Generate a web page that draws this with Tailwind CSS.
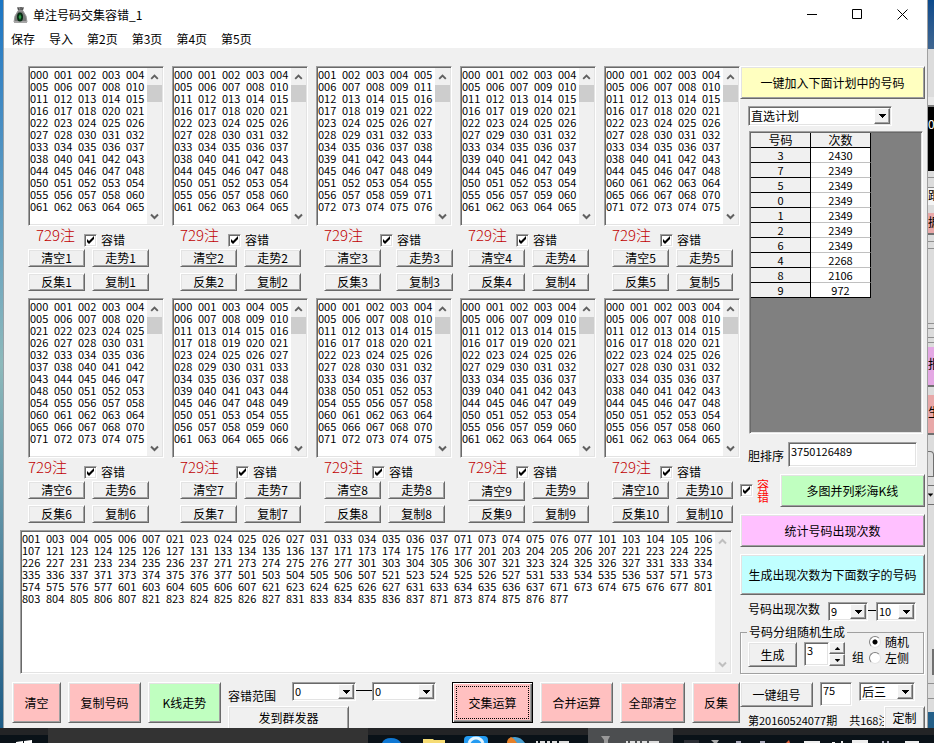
<!DOCTYPE html>
<html lang="zh-CN">
<head>
<meta charset="utf-8">
<title>单注号码交集容错_1</title>
<script src="https://cdn.jsdelivr.net/npm/@tailwindcss/browser@4"></script>
</head>
<body class="flex min-h-screen flex-col overflow-hidden bg-[#0a141b] font-['Noto_Sans_CJK_SC','Liberation_Sans',sans-serif] text-[12px] leading-[14px] text-black">

<svg class="hidden" aria-hidden="true">
  <symbol id="up" viewBox="0 0 15 18"><path d="M4 11.500 7.500 8l3.500 3.500" fill="none" stroke="currentColor" stroke-width="2"/></symbol>
  <symbol id="down" viewBox="0 0 15 18"><path d="M4 8.500 7.500 12 11 8.500" fill="none" stroke="currentColor" stroke-width="2"/></symbol>
  <symbol id="tri" viewBox="0 0 7 4"><path d="M0 0h7v1H6v1H5v1H4v1H3V3H2V2H1V1H0z" fill="currentColor"/></symbol>
  <symbol id="tick" viewBox="0 0 13 13"><path d="M3 5v3l2 2 5-5V2L5 7z" fill="#000"/></symbol>
</svg>

<div class="flex flex-1">
  <div class="w-1 shrink-0 border-r border-[#9aa3a8] bg-linear-to-b from-[#1a76c4] via-[#8db9bb] to-[#1d5c86]"></div>

  <main class="flex min-w-0 flex-1 flex-col bg-[#f0f0f0]">
    <header class="bg-white">
      <div class="flex h-[29px] items-center pl-[9px]">
        <svg class="h-4 w-[15px]" viewBox="0 0 15 16">
          <path d="M4 0h7l-1 4H5z" fill="#8a8a8a"/><path d="M5 1l1 2M8 0v3M10 1 9 3" stroke="#444" stroke-width="1"/>
          <path d="M5 4h5l3 5 1 6H1l1-6z" fill="#777" stroke="#999"/>
          <path d="M1 14h13v2H1z" fill="#a5a5a5"/>
          <ellipse cx="7" cy="10" rx="3" ry="4.500" fill="#062b12"/><path d="M7 7l1.500 3L7 13l-1.500-3z" fill="#2c9a45"/>
        </svg>
        <h1 class="ml-[5px] flex-1">单注号码交集容错_1</h1>
        <button class="flex h-[29px] w-[45px] items-center justify-center" aria-label="最小化"><svg class="h-[11px] w-[11px]" viewBox="0 0 11 11"><path d="M0 5.500h10" stroke="#000"/></svg></button>
        <button class="flex h-[29px] w-[45px] items-center justify-center" aria-label="最大化"><svg class="h-[11px] w-[11px]" viewBox="0 0 11 11"><path d="M.5.500h9v9h-9z" fill="none" stroke="#000"/></svg></button>
        <button class="mr-[2px] flex h-[29px] w-[45px] items-center justify-center" aria-label="关闭"><svg class="h-[11px] w-[11px]" viewBox="0 0 11 11"><path d="M.5.500l10 10M10.500.500l-10 10" stroke="#000"/></svg></button>
      </div>
      <nav class="flex h-[19px] items-center gap-[14px] pl-[7px]">
        <button>保存</button><button>导入</button><button>第2页</button><button>第3页</button><button>第4页</button><button>第5页</button>
      </nav>
    </header>

    <div class="flex flex-1">
      <section class="flex min-w-0 flex-1 flex-col pt-[18px]">
        <div id="panels" class="grid grid-cols-5 gap-x-2 gap-y-[7px] pl-6"></div>

        <div class="mt-[7px] mr-2 ml-4 flex h-36 border border-t-[#a0a0a0] border-r-white border-b-white border-l-[#a0a0a0] bg-white p-px shadow-[inset_1px_1px_0_#696969,inset_-1px_-1px_0_#e3e3e3]">
          <textarea id="result" aria-label="结果号码" class="min-w-0 flex-1 resize-none overflow-hidden text-[11px] leading-[12px] whitespace-pre outline-none [tab-size:24px]"></textarea>
          <div class="flex w-[15px] flex-col justify-between bg-[#f0f0f0] text-[#bfbfbf]">
            <svg class="h-[18px] w-[15px]"><use href="#up"/></svg>
            <svg class="h-[18px] w-[15px]"><use href="#down"/></svg>
          </div>
        </div>

        <div class="mt-2 flex h-[46px] items-start gap-[7px] pl-2">
          <button class="h-[41px] w-[49px] shrink-0 border border-t-white border-r-[#696969] border-b-[#696969] border-l-white bg-[#ffc0c0] shadow-[inset_1px_1px_0_#e3e3e3,inset_-1px_-1px_0_#a0a0a0]">清空</button>
          <button class="h-[41px] w-[73px] shrink-0 border border-t-white border-r-[#696969] border-b-[#696969] border-l-white bg-[#ffc0c0] shadow-[inset_1px_1px_0_#e3e3e3,inset_-1px_-1px_0_#a0a0a0]">复制号码</button>
          <button class="h-[41px] w-[73px] shrink-0 border border-t-white border-r-[#696969] border-b-[#696969] border-l-white bg-[#c0ffc0] shadow-[inset_1px_1px_0_#e3e3e3,inset_-1px_-1px_0_#a0a0a0]">K线走势</button>
          <div class="mr-[9px] flex min-w-[208px] flex-1 flex-col items-start">
            <div class="flex h-6 w-full items-start">
              <label for="from" class="w-16 pt-[7px]">容错范围</label>
              <span class="relative h-[19px] w-16 border border-t-[#a0a0a0] border-r-white border-b-white border-l-[#a0a0a0] bg-white shadow-[inset_1px_1px_0_#696969,inset_-1px_-1px_0_#e3e3e3]">
                <select id="from" class="block h-full w-full appearance-none pl-[2px] text-[11px] leading-[15px] outline-none"><option>0</option></select>
                <span class="pointer-events-none absolute inset-y-px right-px flex w-4 items-center justify-center border border-t-white border-r-[#696969] border-b-[#696969] border-l-white bg-[#f0f0f0] shadow-[inset_-1px_-1px_0_#a0a0a0]"><svg class="h-1 w-[7px]"><use href="#tri"/></svg></span>
              </span>
              <span class="mt-2 h-px w-4 bg-black"></span>
              <span class="relative h-[19px] w-16 border border-t-[#a0a0a0] border-r-white border-b-white border-l-[#a0a0a0] bg-white shadow-[inset_1px_1px_0_#696969,inset_-1px_-1px_0_#e3e3e3]">
                <select aria-label="容错范围上限" class="block h-full w-full appearance-none pl-[2px] text-[11px] leading-[15px] outline-none"><option>0</option></select>
                <span class="pointer-events-none absolute inset-y-px right-px flex w-4 items-center justify-center border border-t-white border-r-[#696969] border-b-[#696969] border-l-white bg-[#f0f0f0] shadow-[inset_-1px_-1px_0_#a0a0a0]"><svg class="h-1 w-[7px]"><use href="#tri"/></svg></span>
              </span>
            </div>
            <button class="h-[22px] w-[121px] border border-b-0 border-t-white border-r-[#696969] border-l-white bg-[#f0f0f0] shadow-[inset_1px_1px_0_#e3e3e3,inset_-1px_0_0_#a0a0a0]">发到群发器</button>
          </div>
          <button class="h-[41px] w-[81px] shrink-0 border border-black bg-[#ffc0c0] p-[3px] shadow-[inset_1px_1px_0_#fff,inset_-1px_-1px_0_#696969,inset_-2px_-2px_0_#a0a0a0]"><span class="flex h-full items-center justify-center border border-dotted border-black">交集运算</span></button>
          <button class="h-[41px] w-[73px] shrink-0 border border-t-white border-r-[#696969] border-b-[#696969] border-l-white bg-[#ffc0c0] shadow-[inset_1px_1px_0_#e3e3e3,inset_-1px_-1px_0_#a0a0a0]">合并运算</button>
          <button class="h-[41px] w-[65px] shrink-0 border border-t-white border-r-[#696969] border-b-[#696969] border-l-white bg-[#ffc0c0] shadow-[inset_1px_1px_0_#e3e3e3,inset_-1px_-1px_0_#a0a0a0]">全部清空</button>
          <button class="h-[41px] w-12 shrink-0 border border-t-white border-r-[#696969] border-b-[#696969] border-l-white bg-[#ffc0c0] shadow-[inset_1px_1px_0_#e3e3e3,inset_-1px_-1px_0_#a0a0a0]">反集</button>
        </div>
      </section>

      <aside class="flex w-[187px] shrink-0 flex-col pt-[18px] pr-[2px]">
        <button class="h-[33px] border border-t-white border-r-[#696969] border-b-[#696969] border-l-white bg-[#ffffc0] shadow-[inset_1px_1px_0_#e3e3e3,inset_-1px_-1px_0_#a0a0a0]">一键加入下面计划中的号码</button>

        <div class="relative mt-[7px] ml-2 h-5 w-36 border border-t-[#a0a0a0] border-r-white border-b-white border-l-[#a0a0a0] bg-white shadow-[inset_1px_1px_0_#696969,inset_-1px_-1px_0_#e3e3e3]">
          <select aria-label="计划" class="block h-full w-full appearance-none pl-[2px] outline-none"><option>直选计划</option></select>
          <span class="pointer-events-none absolute inset-y-px right-px flex w-4 items-center justify-center border border-t-white border-r-[#696969] border-b-[#696969] border-l-white bg-[#f0f0f0] shadow-[inset_-1px_-1px_0_#a0a0a0]"><svg class="h-1 w-[7px]"><use href="#tri"/></svg></span>
        </div>

        <div class="mt-[5px] mr-[2px] ml-[9px] h-[303px] border border-t-[#a0a0a0] border-r-white border-b-white border-l-[#a0a0a0] bg-[#808080] p-px shadow-[inset_1px_1px_0_#696969,inset_-1px_-1px_0_#e3e3e3]">
          <table class="w-[120px] table-fixed border-separate border-spacing-0 text-center text-[11px] leading-[14px]">
            <thead><tr>
              <th class="h-[15px] border-r border-b border-black bg-[#f0f0f0] p-0 text-[12px] font-normal">号码</th>
              <th class="h-[15px] border-r border-b border-black bg-[#f0f0f0] p-0 text-[12px] font-normal">次数</th>
            </tr></thead>
            <tbody id="counts"></tbody>
          </table>
        </div>

        <div class="mt-2 flex h-[25px] items-start pl-2">
          <label for="order" class="w-10 pt-[7px]">胆排序</label>
          <input id="order" value="3750126489" class="h-[25px] w-[129px] border border-t-[#a0a0a0] border-r-white border-b-white border-l-[#a0a0a0] bg-white pb-[8px] pl-[2px] text-[11px] shadow-[inset_1px_1px_0_#696969,inset_-1px_-1px_0_#e3e3e3] outline-none">
        </div>

        <div class="mt-[7px] flex items-center">
          <label class="flex flex-1 items-center gap-1 text-[#ff0000]">
            <span class="relative h-[13px] w-[13px]"><input type="checkbox" checked class="peer block h-[13px] w-[13px] appearance-none border border-t-[#a0a0a0] border-r-white border-b-white border-l-[#a0a0a0] bg-white shadow-[inset_1px_1px_0_#696969,inset_-1px_-1px_0_#e3e3e3]"><svg class="pointer-events-none absolute top-0 left-0 hidden h-[13px] w-[13px] peer-checked:block"><use href="#tick"/></svg></span>
            <span class="w-3 leading-[12px]">容错</span>
          </label>
          <button class="h-[33px] w-[145px] border border-t-white border-r-[#696969] border-b-[#696969] border-l-white bg-[#c0ffc0] shadow-[inset_1px_1px_0_#e3e3e3,inset_-1px_-1px_0_#a0a0a0]">多图并列彩海K线</button>
        </div>

        <button class="mt-[7px] h-[33px] border border-t-white border-r-[#696969] border-b-[#696969] border-l-white bg-[#ffc0ff] shadow-[inset_1px_1px_0_#e3e3e3,inset_-1px_-1px_0_#a0a0a0]">统计号码出现次数</button>
        <button class="mt-[7px] h-[41px] border border-t-white border-r-[#696969] border-b-[#696969] border-l-white bg-[#c0ffff] shadow-[inset_1px_1px_0_#e3e3e3,inset_-1px_-1px_0_#a0a0a0]">生成出现次数为下面数字的号码</button>

        <div class="mt-[7px] flex h-[19px] items-start pl-2">
          <label for="lo" class="w-20">号码出现次数</label>
          <span class="relative h-[19px] w-10 border border-t-[#a0a0a0] border-r-white border-b-white border-l-[#a0a0a0] bg-white shadow-[inset_1px_1px_0_#696969,inset_-1px_-1px_0_#e3e3e3]">
            <select id="lo" class="block h-full w-full appearance-none pl-[2px] text-[11px] leading-[15px] outline-none"><option>9</option></select>
            <span class="pointer-events-none absolute inset-y-px right-px flex w-4 items-center justify-center border border-t-white border-r-[#696969] border-b-[#696969] border-l-white bg-[#f0f0f0] shadow-[inset_-1px_-1px_0_#a0a0a0]"><svg class="h-1 w-[7px]"><use href="#tri"/></svg></span>
          </span>
          <span class="mt-2 h-px w-2 bg-black"></span>
          <span class="relative h-[19px] w-10 border border-t-[#a0a0a0] border-r-white border-b-white border-l-[#a0a0a0] bg-white shadow-[inset_1px_1px_0_#696969,inset_-1px_-1px_0_#e3e3e3]">
            <select aria-label="次数上限" class="block h-full w-full appearance-none pl-[2px] text-[11px] leading-[15px] outline-none"><option>10</option></select>
            <span class="pointer-events-none absolute inset-y-px right-px flex w-4 items-center justify-center border border-t-white border-r-[#696969] border-b-[#696969] border-l-white bg-[#f0f0f0] shadow-[inset_-1px_-1px_0_#a0a0a0]"><svg class="h-1 w-[7px]"><use href="#tri"/></svg></span>
          </span>
        </div>

        <fieldset class="mt-1 mr-px flex h-[49px] border border-[#a0a0a0] shadow-[1px_1px_0_#fff,inset_1px_0_0_#fff]">
          <legend class="ml-[6px] px-[2px]">号码分组随机生成</legend>
          <div class="flex items-start pl-[7px] pt-[3px]">
            <button class="h-[25px] w-[49px] border border-t-white border-r-[#696969] border-b-[#696969] border-l-white bg-[#f0f0f0] shadow-[inset_1px_1px_0_#e3e3e3,inset_-1px_-1px_0_#a0a0a0]">生成</button>
            <input value="3" aria-label="组数" class="ml-[7px] h-6 w-[25px] border border-t-[#a0a0a0] border-r-white border-b-white border-l-[#a0a0a0] bg-white pb-[8px] pl-[2px] text-[11px] shadow-[inset_1px_1px_0_#696969,inset_-1px_-1px_0_#e3e3e3] outline-none">
            <span class="flex w-4 flex-col">
              <button aria-label="增加" class="flex h-3 items-center justify-center border border-t-white border-r-[#696969] border-b-[#696969] border-l-white bg-[#f0f0f0] shadow-[inset_-1px_-1px_0_#a0a0a0]"><svg class="h-[3px] w-[5px] rotate-180"><use href="#tri"/></svg></button>
              <button aria-label="减少" class="flex h-3 items-center justify-center border border-t-white border-r-[#696969] border-b-[#696969] border-l-white bg-[#f0f0f0] shadow-[inset_-1px_-1px_0_#a0a0a0]"><svg class="h-[3px] w-[5px]"><use href="#tri"/></svg></button>
            </span>
            <span class="ml-[7px] pt-2">组</span>
            <div class="-mt-[7px] ml-[5px] flex flex-col gap-[2px]">
              <label class="flex items-center gap-1"><input type="radio" name="side" checked class="h-3 w-3 appearance-none rounded-full border border-t-[#808080] border-r-[#e3e3e3] border-b-[#e3e3e3] border-l-[#808080] bg-white checked:bg-[radial-gradient(circle,#000_2px,#fff_3px)]">随机</label>
              <label class="flex items-center gap-1"><input type="radio" name="side" class="h-3 w-3 appearance-none rounded-full border border-t-[#808080] border-r-[#e3e3e3] border-b-[#e3e3e3] border-l-[#808080] bg-white checked:bg-[radial-gradient(circle,#000_2px,#fff_3px)]">左侧</label>
            </div>
          </div>
        </fieldset>

        <div class="mt-2 flex h-6 items-start gap-[7px]">
          <button class="h-[25px] w-[73px] border border-t-white border-r-[#696969] border-b-[#696969] border-l-white bg-[#f0f0f0] shadow-[inset_1px_1px_0_#e3e3e3,inset_-1px_-1px_0_#a0a0a0]">一键组号</button>
          <input value="75" aria-label="组号" class="h-6 w-8 border border-t-[#a0a0a0] border-r-white border-b-white border-l-[#a0a0a0] bg-white pb-[8px] pl-[2px] text-[11px] shadow-[inset_1px_1px_0_#696969,inset_-1px_-1px_0_#e3e3e3] outline-none">
          <span class="relative h-[19px] w-14 border border-t-[#a0a0a0] border-r-white border-b-white border-l-[#a0a0a0] bg-white shadow-[inset_1px_1px_0_#696969,inset_-1px_-1px_0_#e3e3e3]">
            <select aria-label="位置" class="block h-full w-full appearance-none pl-[2px] leading-[15px] outline-none"><option>后三</option></select>
            <span class="pointer-events-none absolute inset-y-px right-px flex w-4 items-center justify-center border border-t-white border-r-[#696969] border-b-[#696969] border-l-white bg-[#f0f0f0] shadow-[inset_-1px_-1px_0_#a0a0a0]"><svg class="h-1 w-[7px]"><use href="#tri"/></svg></span>
          </span>
        </div>
        <div class="flex h-[22px] items-start pl-2">
          <p class="flex min-w-0 flex-1 gap-3 overflow-hidden pt-[7px] text-[11px] whitespace-nowrap"><span>第20160524077期</span><span>共168注</span></p>
          <button class="h-[22px] w-[41px] border border-b-0 border-t-white border-r-[#696969] border-l-white bg-[#f0f0f0] shadow-[inset_1px_1px_0_#e3e3e3,inset_-1px_0_0_#a0a0a0]">定制</button>
        </div>
      </aside>
    </div>
  </main>

  <!-- Edge of the window that sits behind this one -->
  <div class="flex w-[7px] shrink-0 flex-col overflow-hidden border-l border-[#a0a0a0] bg-[#dcdcdc] whitespace-nowrap">
    <div class="h-[49px] bg-linear-to-b from-[#0a4a8c] to-[#3f6690]"></div>
    <div class="mt-12 h-[10px] border-b-2 border-[#808080] bg-[#e8e8e8]"></div>
    <div class="h-16 bg-black pt-[10px] text-white">0</div>
    <div class="mt-[6px] h-[11px] border-y border-[#909090]"></div>
    <div class="h-[17px] bg-[#f4f4f4]">跟</div>
    <div class="mt-2 h-[22px] border-b-2 border-[#707070] bg-[#e8a8a8] pt-[2px]">据</div>
    <div class="mt-[6px] h-2 border-y border-[#909090]"></div>
    <div class="mt-[74px] h-[6px] border-y border-[#909090]"></div>
    <div class="mt-2 h-[6px] border-y border-[#909090]"></div>
    <div class="mt-1 h-10 border-b-2 border-[#707070] bg-[#e4a8e4] pt-[10px]">报</div>
    <div class="mt-2 h-10 border-b-2 border-[#707070] bg-[#e8a8a8] pt-[10px]">生</div>
    <div class="mt-4 h-[26px] rounded-tr border border-l-0 border-[#707070]"></div>
    <div class="mt-2 flex h-5 items-center border-y border-[#707070]"><svg class="h-1 w-[5px]"><use href="#tri"/></svg></div>
    <div class="mt-36 ml-[3px] h-[26px] border-r-2 border-[#707070]"></div>
    <div class="mt-2 h-4 border-y border-[#909090]"></div>
    <div class="flex-1"></div>
    <div class="h-4 bg-[#245f88]"></div>
  </div>
</div>

<footer class="h-[15px] overflow-hidden bg-[#0a1218]">
  <svg class="h-[15px] w-[934px]" viewBox="0 0 934 15">
    <path d="M0 0h934v7H0z" fill="#232426"/>
    <path d="M48 0h320v15H48z" fill="#333"/>
    <path d="M588 0h85v15h-85z" fill="#4c4e50"/>
    <path d="M16 14l7-1v2h-7zM24 13l8-1v3h-8z" fill="#fff"/>
    <path d="M382 15q2-5 9-5t10 5z" fill="#0f78d4"/>
    <path d="M423 11h10l1 1h11v3h-22z" fill="#f6dc74"/>
    <rect x="464" y="8" width="24" height="12" rx="4" fill="#249bf2"/><path d="M469 15q2-5 7-5t7 5" fill="none" stroke="#e4f5ff" stroke-width="3"/>
    <path d="M507 15q1-6 8-6 6 0 10 6z" fill="#4b9fd0"/><path d="M507 15q0-4 4-6l3 2 3 4z" fill="#e68028"/>
    <path d="M536 14h2M540 14h5M547 14h3M552 14h5M559 14h10M626 14h2M630 14h5M637 14h3M642 14h5M649 14h10" stroke="#ddd" stroke-width="2"/>
    <path d="M601 8h9l-2 4v3h-4v-3z" fill="#999"/>
    <path d="M684 12h15v3h-15z" fill="#2c2e35"/>
    <path d="M711 12h8l-2 3h-3z" fill="#aaa"/>
    <path d="M736 14h5M760 14h5M882 14h2M887 14h2" stroke="#aab" stroke-width="2"/>
    <path d="M786 15l3-3 1 3z" fill="#e2613a"/>
    <path d="M804 13h16v2h-16zM852 12h16v3h-16zM905 13h14v2h-14zM832 14h3v1h-3zM841 13h2v2h-2z" fill="#eee"/>
  </svg>
</footer>

<script>
const A = `000 001 002 003 004
005 006 007 008 010
011 012 013 014 015
016 017 018 020 021
022 023 024 025 026
027 028 030 031 032
033 034 035 036 037
038 040 041 042 043
044 045 046 047 048
`;
const B = `000 001 002 003 004
005 006 007 009 010
011 012 013 014 015
016 017 019 020 021
022 023 024 025 026
027 029 030 031 032
033 034 035 036 037
039 040 041 042 043
044 045 046 047 049
050 051 052 053 054
055 056 057 059 060
061 062 063 064 065`;
const A1 = A + `050 051 052 053 054
055 056 057 058 060
061 062 063 064 065`;
const texts = [
A1, A1,
`001 002 003 004 005
006 007 008 009 011
012 013 014 015 016
017 018 019 021 022
023 024 025 026 027
028 029 031 032 033
034 035 036 037 038
039 041 042 043 044
045 046 047 048 049
051 052 053 054 055
056 057 058 059 071
072 073 074 075 076`,
B,
A + `060 061 062 063 064
065 066 067 068 070
071 072 073 074 075`,
`000 001 002 003 004
005 006 007 008 020
021 022 023 024 025
026 027 028 030 031
032 033 034 035 036
037 038 040 041 042
043 044 045 046 047
048 050 051 052 053
054 055 056 057 058
060 061 062 063 064
065 066 067 068 070
071 072 073 074 075`,
`000 001 003 004 005
006 007 008 009 010
011 013 014 015 016
017 018 019 020 021
023 024 025 026 027
028 029 030 031 033
034 035 036 037 038
039 040 041 043 044
045 046 047 048 049
050 051 053 054 055
056 057 058 059 060
061 063 064 065 066`,
`000 001 002 003 004
005 006 007 008 010
011 012 013 014 015
016 017 018 020 021
022 023 024 025 026
027 028 030 031 032
033 034 035 036 037
038 050 051 052 053
054 055 056 057 058
060 061 062 063 064
065 066 067 068 070
071 072 073 074 075`,
B, A1];

const indent = ['', 'pl-2', 'pl-2', 'pl-2', 'pl-2', '', 'pl-2', 'pl-2', 'pl-2', 'pl-2'];
const labelIndent = ['pl-2 w-14', 'pl-2 w-14', 'pl-2 w-16', 'pl-2 w-14', 'pl-2 w-14', 'w-14', 'pl-2 w-16', 'pl-2 w-14', 'pl-2 w-14', 'pl-2 w-14'];
const tabs = s => s.replace(/ /g, '\t');
const btn = (t, h = 'h-[18px]') => `<button class="${h} w-[57px] shrink-0 border border-t-white border-r-[#696969] border-b-[#696969] border-l-white bg-[#f0f0f0] leading-[14px] shadow-[inset_1px_1px_0_#e3e3e3,inset_-1px_-1px_0_#a0a0a0]">${t}</button>`;

document.getElementById('panels').innerHTML = texts.map((t, i) => {
  const n = i + 1, gap = n === 3 ? 'gap-[15px]' : 'gap-[7px]';
  return `<div class="min-w-0">
    <div class="flex h-40 border border-t-[#a0a0a0] border-r-white border-b-white border-l-[#a0a0a0] bg-white p-px shadow-[inset_1px_1px_0_#696969,inset_-1px_-1px_0_#e3e3e3]">
      <textarea aria-label="号码${n}" class="min-w-0 flex-1 resize-none overflow-hidden text-[11px] leading-[12px] whitespace-pre outline-none [tab-size:24px]">${tabs(t)}</textarea>
      <div class="flex w-[15px] flex-col bg-[#f0f0f0] text-[#606060]">
        <svg class="h-[17px] w-[15px]"><use href="#up"/></svg>
        <div class="h-[17px] bg-[#cdcdcd]"></div>
        <svg class="mt-auto h-[18px] w-[15px]"><use href="#down"/></svg>
      </div>
    </div>
    <div class="flex h-[23px] items-start">
      <span class="${labelIndent[i]} text-[15px] leading-[18px] font-light whitespace-nowrap text-[#c00000]">729注</span>
      <label class="flex items-center gap-1 pt-[7px]">
        <span class="relative h-[13px] w-[13px]"><input type="checkbox" checked class="peer block h-[13px] w-[13px] appearance-none border border-t-[#a0a0a0] border-r-white border-b-white border-l-[#a0a0a0] bg-white shadow-[inset_1px_1px_0_#696969,inset_-1px_-1px_0_#e3e3e3]"><svg class="pointer-events-none absolute top-0 left-0 hidden h-[13px] w-[13px] peer-checked:block"><use href="#tick"/></svg></span>
        容错
      </label>
    </div>
    <div class="flex h-6 items-start ${gap} ${indent[i]}">${btn('清空' + n, n === 9 ? 'h-5' : 'h-[18px]')}${btn('走势' + n)}</div>
    <div class="flex h-[18px] items-start ${gap} ${indent[i]}">${btn('反集' + n)}${btn('复制' + n)}</div>
  </div>`;
}).join('');

document.getElementById('result').value = tabs(`001 003 004 005 006 007 021 023 024 025 026 027 031 033 034 035 036 037 071 073 074 075 076 077 101 103 104 105 106
107 121 123 124 125 126 127 131 133 134 135 136 137 171 173 174 175 176 177 201 203 204 205 206 207 221 223 224 225
226 227 231 233 234 235 236 237 271 273 274 275 276 277 301 303 304 305 306 307 321 323 324 325 326 327 331 333 334
335 336 337 371 373 374 375 376 377 501 503 504 505 506 507 521 523 524 525 526 527 531 533 534 535 536 537 571 573
574 575 576 577 601 603 604 605 606 607 621 623 624 625 626 627 631 633 634 635 636 637 671 673 674 675 676 677 801
803 804 805 806 807 821 823 824 825 826 827 831 833 834 835 836 837 871 873 874 875 876 877`);

document.getElementById('counts').innerHTML = [[3,2430],[7,2349],[5,2349],[0,2349],[1,2349],[2,2349],[6,2349],[4,2268],[8,2106],[9,972]].map(([a, b], i) =>
  `<tr><td class="h-[15px] border-r border-b border-black bg-[#f0f0f0] p-0">${a}</td><td class="${i === 9 ? 'border-b-black' : 'border-b-[#c0c0c0]'} h-[15px] border-r border-b border-r-black bg-white p-0">${b}</td></tr>`).join('');
</script>
</body>
</html>
